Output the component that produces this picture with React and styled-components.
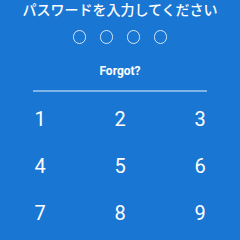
import React from "react";
import styled, { createGlobalStyle } from "styled-components";

const Global = createGlobalStyle`
  html, body { margin: 0; padding: 0; background: #1976d2; }
  * { box-sizing: border-box; }
`;

const Screen = styled.div`
  width: 240px;
  height: 240px;
  overflow: hidden;
  background: #1976d2;
  color: #fff;
  display: flex;
  flex-direction: column;
  align-items: center;
  font-family: Roboto, "Noto Sans CJK JP", sans-serif;
`;

const Title = styled.div`
  font-family: "Noto Sans CJK JP", sans-serif;
  font-weight: 500;
  font-size: 14px;
  line-height: 18px;
  margin-top: 0px;
  white-space: nowrap;
`;

const Dots = styled.div`
  display: flex;
  gap: 13.5px;
  margin-top: 12px;
`;

const Dot = styled.span`
  width: 13.5px;
  height: 13.5px;
  border-radius: 50%;
  border: 1.5px solid rgba(255, 255, 255, 0.8);
  background: ${(p) => (p.$filled ? "#fff" : "transparent")};
`;

const Forgot = styled.button`
  margin-top: 20px;
  border: none;
  background: none;
  padding: 0;
  color: #fff;
  font-family: Roboto, sans-serif;
  font-weight: 700;
  font-size: 12px;
  line-height: 14px;
`;

const Divider = styled.div`
  width: 174px;
  height: 2px;
  margin-top: 12px;
  background: rgba(255, 255, 255, 0.45);
`;

const Keypad = styled.div`
  width: 240px;
  margin-top: 4px;
  display: grid;
  grid-template-columns: repeat(3, 80px);
  grid-auto-rows: 47px;
`;

const Key = styled.button`
  border: none;
  background: none;
  padding: 0;
  color: #fff;
  font-family: Roboto, sans-serif;
  font-size: 20px;
  line-height: 47px;
  text-align: center;
`;

export default function App() {
  const keys = ["1", "2", "3", "4", "5", "6", "7", "8", "9"];
  return (
    <>
      <Global />
      <Screen>
        <Title>パスワードを入力してください</Title>
        <Dots>
          {[0, 1, 2, 3].map((i) => (
            <Dot key={i} />
          ))}
        </Dots>
        <Forgot>Forgot?</Forgot>
        <Divider />
        <Keypad>
          {keys.map((k) => (
            <Key key={k}>{k}</Key>
          ))}
        </Keypad>
      </Screen>
    </>
  );
}
